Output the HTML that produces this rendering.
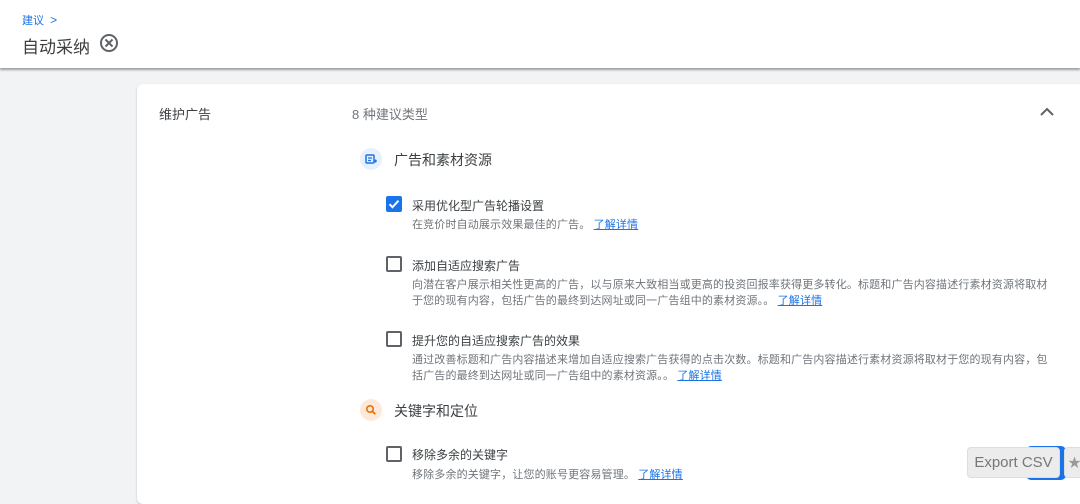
<!DOCTYPE html>
<html><head><meta charset="utf-8"><style>
*{margin:0;padding:0;box-sizing:border-box}
body{width:1080px;height:489px;overflow:hidden;background:#f1f3f4;font-family:"Liberation Sans","Noto Sans CJK SC",sans-serif;position:relative;color:#3c4043}
.a{position:absolute;white-space:nowrap}
.hdr{position:absolute;left:0;top:0;width:1080px;height:68px;background:#fff;box-shadow:0 2px 2px rgba(0,0,0,.35)}
.card{position:absolute;left:137px;top:84px;width:960px;height:420px;background:#fff;box-shadow:0 1px 2px rgba(0,0,0,.2);border-radius:6px}
.cb{position:absolute;width:16px;height:16px;border:2px solid #5f6368;border-radius:2px}
.t{font-size:12px;color:#3c4043}
.d{font-size:11px;letter-spacing:0.15px;color:#70757a;line-height:15.5px}
.l{color:#1a73e8;text-decoration:underline}
</style></head><body>
<div class="hdr"></div>
<div class="a" style="left:22px;top:12px;font-size:11px;color:#1a73e8">建议 <span style="font-size:12px;margin-left:3px">&gt;</span></div>
<div class="a" style="left:22px;top:33px;font-size:17px;color:#3c4043">自动采纳</div>
<svg class="a" style="left:99px;top:33px" width="20" height="20" viewBox="0 0 20 20"><circle cx="10" cy="10" r="8" fill="none" stroke="#5f6368" stroke-width="2"/><path d="M6.5 6.5l7 7M13.5 6.5l-7 7" stroke="#5f6368" stroke-width="2"/></svg>
<div class="card"></div>
<div class="a" style="left:159px;top:104px;font-size:13px">维护广告</div>
<div class="a" style="left:352px;top:104px;font-size:13px;color:#70757a">8 种建议类型</div>
<svg class="a" style="left:1038px;top:104px" width="18" height="14" viewBox="0 0 18 14"><path d="M3 11l6-6 6 6" fill="none" stroke="#5f6368" stroke-width="2"/></svg>
<div class="a" style="left:360px;top:148px;width:22px;height:22px;border-radius:50%;background:#e8f0fe"></div>
<svg class="a" style="left:365px;top:153px" width="12" height="12" viewBox="0 0 12 12"><rect x="1" y="2" width="8" height="8" rx="1" fill="none" stroke="#1a73e8" stroke-width="1.5"/><path d="M3 5h4M3 7.5h3M9 8h3M10.5 6.5v3" stroke="#1a73e8" stroke-width="1.3"/></svg>
<div class="a" style="left:394px;top:150px;font-size:14px">广告和素材资源</div>
<div class="cb" style="left:386px;top:196px;background:#1a73e8;border-color:#1a73e8"></div>
<svg class="a" style="left:386px;top:196px" width="16" height="16" viewBox="0 0 16 16"><path d="M3.5 8.2l3 3 6-6.5" fill="none" stroke="#fff" stroke-width="2"/></svg>
<div class="a t" style="left:412px;top:197px">采用优化型广告轮播设置</div>
<div class="a d" style="left:412px;top:218px">在竞价时自动展示效果最佳的广告。 <span class="l">了解详情</span></div>
<div class="cb" style="left:386px;top:256px"></div>
<div class="a t" style="left:412px;top:257px">添加自适应搜索广告</div>
<div class="a d" style="left:412px;top:278px">向潜在客户展示相关性更高的广告，以与原来大致相当或更高的投资回报率获得更多转化。标题和广告内容描述行素材资源将取材<br>于您的现有内容，包括广告的最终到达网址或同一广告组中的素材资源。。 <span class="l">了解详情</span></div>
<div class="cb" style="left:386px;top:331px"></div>
<div class="a t" style="left:412px;top:332px">提升您的自适应搜索广告的效果</div>
<div class="a d" style="left:412px;top:353px">通过改善标题和广告内容描述来增加自适应搜索广告获得的点击次数。标题和广告内容描述行素材资源将取材于您的现有内容，包<br>括广告的最终到达网址或同一广告组中的素材资源。。 <span class="l">了解详情</span></div>
<div class="a" style="left:360px;top:399px;width:22px;height:22px;border-radius:50%;background:#fde9d9"></div>
<svg class="a" style="left:365px;top:404px" width="12" height="12" viewBox="0 0 12 12"><circle cx="5" cy="5" r="3.2" fill="none" stroke="#e8710a" stroke-width="1.6"/><path d="M7.3 7.3l3 3" stroke="#e8710a" stroke-width="1.8"/></svg>
<div class="a" style="left:394px;top:401px;font-size:14px">关键字和定位</div>
<div class="cb" style="left:386px;top:446px"></div>
<div class="a t" style="left:412px;top:446px">移除多余的关键字</div>
<div class="a d" style="left:412px;top:468px">移除多余的关键字，让您的账号更容易管理。 <span class="l">了解详情</span></div>
<div class="a" style="left:1026px;top:446px;width:40px;height:34px;border-radius:5px;background:#1a73e8"></div>
<div class="a" style="left:967px;top:447px;width:93px;height:31px;border-radius:4px;background:#ececec;border:1px solid #ddd;font-size:15px;color:#777;line-height:29px;text-align:center">Export CSV</div>
<div class="a" style="left:1064px;top:447px;width:20px;height:31px;border-radius:4px;background:#ececec;border:1px solid #ddd;font-size:13px;color:#999;line-height:29px;padding-left:3px">★</div>
</body></html>
